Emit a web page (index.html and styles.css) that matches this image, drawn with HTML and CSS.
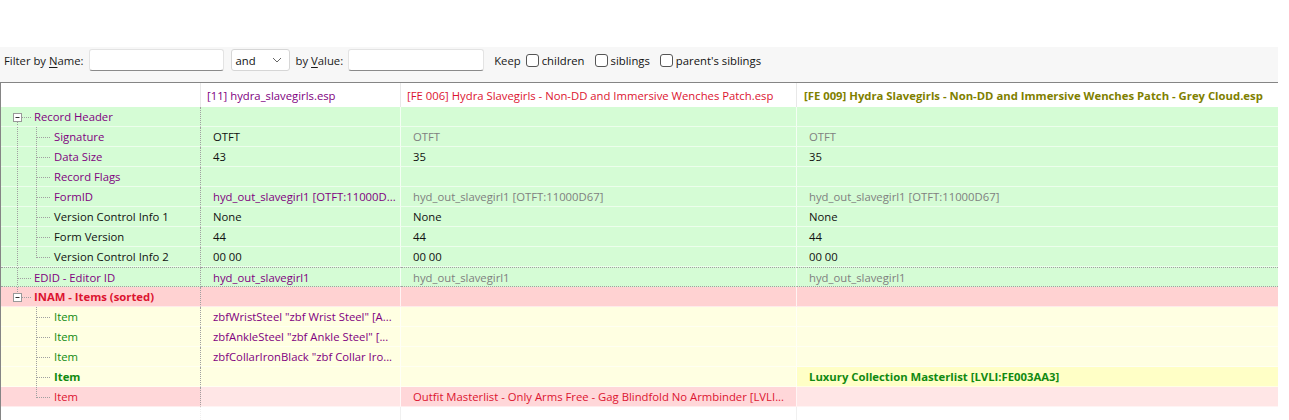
FILE: index.html
```html
<!DOCTYPE html>
<html lang="en">
<head>
<meta charset="UTF-8">
<title>Record View</title>
<link rel="stylesheet" href="styles.css">
</head>
<body>

<svg class="defs" width="0" height="0">
    <!-- tree guide pieces, one per kind of row -->
    <symbol id="root-open-first" viewBox="0 0 32 20">
        <rect x="12.5" y="6.5" width="8" height="8" fill="#fff" stroke="#999"/>
        <path d="M14.5 10.5h4" stroke="#333"/>
        <path d="M21 10.5h9M16.5 15v5" stroke="#a0a0a0" stroke-dasharray="1 1"/>
    </symbol>
    <symbol id="root-leaf" viewBox="0 0 32 20">
        <path d="M16.5 0v20M17 10.5h13" stroke="#a0a0a0" stroke-dasharray="1 1"/>
    </symbol>
    <symbol id="root-open-last" viewBox="0 0 32 20">
        <rect x="12.5" y="6.5" width="8" height="8" fill="#fff" stroke="#999"/>
        <path d="M14.5 10.5h4" stroke="#333"/>
        <path d="M21 10.5h9M16.5 0v6" stroke="#a0a0a0" stroke-dasharray="1 1"/>
    </symbol>
    <symbol id="child-mid" viewBox="0 0 52 20">
        <path d="M16.5 0v20M35.5 0v20M36 10.5h13" stroke="#a0a0a0" stroke-dasharray="1 1"/>
    </symbol>
    <symbol id="child-end" viewBox="0 0 52 20">
        <path d="M16.5 0v20M35.5 0v11M36 10.5h13" stroke="#a0a0a0" stroke-dasharray="1 1"/>
    </symbol>
    <symbol id="last-child-mid" viewBox="0 0 52 20">
        <path d="M35.5 0v20M36 10.5h13" stroke="#a0a0a0" stroke-dasharray="1 1"/>
    </symbol>
    <symbol id="last-child-end" viewBox="0 0 52 20">
        <path d="M35.5 0v11M36 10.5h13" stroke="#a0a0a0" stroke-dasharray="1 1"/>
    </symbol>
</svg>

<div class="page">

<div class="filter-bar">
    <label class="lbl">Filter by <u>N</u>ame:</label>
    <input type="text" class="field name-field">
    <div class="combo">
        <span>and</span>
        <svg width="10" height="6" viewBox="0 0 10 6"><path d="M1 1l4 4 4-4" fill="none" stroke="#666"/></svg>
    </div>
    <label class="lbl value-lbl">by <u>V</u>alue:</label>
    <input type="text" class="field value-field">
    <span class="lbl keep">Keep</span>
    <label class="check"><input type="checkbox">children</label>
    <label class="check"><input type="checkbox">siblings</label>
    <label class="check"><input type="checkbox">parent's siblings</label>
</div>

<div class="view">
    <div class="row head">
        <div class="cell c1"></div>
        <div class="cell c2 purple">[11] hydra_slavegirls.esp</div>
        <div class="cell c3 red">[FE 006] Hydra Slavegirls - Non-DD and Immersive Wenches Patch.esp</div>
        <div class="cell c4 olive bold">[FE 009] Hydra Slavegirls - Non-DD and Immersive Wenches Patch - Grey Cloud.esp</div>
    </div>

    <div class="row green">
        <div class="cell c1 purple"><svg class="guide root"><use href="#root-open-first"/></svg>Record Header</div>
        <div class="cell c2"></div>
        <div class="cell c3"></div>
        <div class="cell c4"></div>
    </div>
    <div class="row green">
        <div class="cell c1 purple"><svg class="guide"><use href="#child-mid"/></svg>Signature</div>
        <div class="cell c2">OTFT</div>
        <div class="cell c3 grey">OTFT</div>
        <div class="cell c4 grey">OTFT</div>
    </div>
    <div class="row green">
        <div class="cell c1 purple"><svg class="guide"><use href="#child-mid"/></svg>Data Size</div>
        <div class="cell c2">43</div>
        <div class="cell c3">35</div>
        <div class="cell c4">35</div>
    </div>
    <div class="row green">
        <div class="cell c1 purple"><svg class="guide"><use href="#child-mid"/></svg>Record Flags</div>
        <div class="cell c2"></div>
        <div class="cell c3"></div>
        <div class="cell c4"></div>
    </div>
    <div class="row green">
        <div class="cell c1 purple"><svg class="guide"><use href="#child-mid"/></svg>FormID</div>
        <div class="cell c2 purple">hyd_out_slavegirl1 [OTFT:11000D...</div>
        <div class="cell c3 grey">hyd_out_slavegirl1 [OTFT:11000D67]</div>
        <div class="cell c4 grey">hyd_out_slavegirl1 [OTFT:11000D67]</div>
    </div>
    <div class="row green">
        <div class="cell c1"><svg class="guide"><use href="#child-mid"/></svg>Version Control Info 1</div>
        <div class="cell c2">None</div>
        <div class="cell c3">None</div>
        <div class="cell c4">None</div>
    </div>
    <div class="row green">
        <div class="cell c1"><svg class="guide"><use href="#child-mid"/></svg>Form Version</div>
        <div class="cell c2">44</div>
        <div class="cell c3">44</div>
        <div class="cell c4">44</div>
    </div>
    <div class="row green">
        <div class="cell c1"><svg class="guide"><use href="#child-end"/></svg>Version Control Info 2</div>
        <div class="cell c2">00 00</div>
        <div class="cell c3">00 00</div>
        <div class="cell c4">00 00</div>
    </div>
    <div class="row green dotted">
        <div class="cell c1 purple"><svg class="guide root"><use href="#root-leaf"/></svg>EDID - Editor ID</div>
        <div class="cell c2 purple">hyd_out_slavegirl1</div>
        <div class="cell c3 grey">hyd_out_slavegirl1</div>
        <div class="cell c4 grey">hyd_out_slavegirl1</div>
    </div>

    <div class="row pink">
        <div class="cell c1 red bold"><svg class="guide root"><use href="#root-open-last"/></svg>INAM - Items (sorted)</div>
        <div class="cell c2"></div>
        <div class="cell c3"></div>
        <div class="cell c4"></div>
    </div>
    <div class="row yellow">
        <div class="cell c1 green-text"><svg class="guide"><use href="#last-child-mid"/></svg>Item</div>
        <div class="cell c2 purple">zbfWristSteel "zbf Wrist Steel" [A...</div>
        <div class="cell c3"></div>
        <div class="cell c4"></div>
    </div>
    <div class="row yellow">
        <div class="cell c1 green-text"><svg class="guide"><use href="#last-child-mid"/></svg>Item</div>
        <div class="cell c2 purple">zbfAnkleSteel "zbf Ankle Steel" [...</div>
        <div class="cell c3"></div>
        <div class="cell c4"></div>
    </div>
    <div class="row yellow">
        <div class="cell c1 green-text"><svg class="guide"><use href="#last-child-mid"/></svg>Item</div>
        <div class="cell c2 purple">zbfCollarIronBlack "zbf Collar Iro...</div>
        <div class="cell c3"></div>
        <div class="cell c4"></div>
    </div>
    <div class="row yellow">
        <div class="cell c1 green-text bold"><svg class="guide"><use href="#last-child-mid"/></svg>Item</div>
        <div class="cell c2"></div>
        <div class="cell c3"></div>
        <div class="cell c4 added green-text bold">Luxury Collection Masterlist [LVLI:FE003AA3]</div>
    </div>
    <div class="row rose">
        <div class="cell c1 red strong-rose"><svg class="guide"><use href="#last-child-end"/></svg>Item</div>
        <div class="cell c2"></div>
        <div class="cell c3 red strong-rose">Outfit Masterlist - Only Arms Free - Gag Blindfold No Armbinder [LVLI...</div>
        <div class="cell c4"></div>
    </div>

    <div class="row filler">
        <div class="cell c1"></div>
        <div class="cell c2"></div>
        <div class="cell c3"></div>
        <div class="cell c4"></div>
    </div>
</div>

</div>

</body>
</html>
```

FILE: styles.css
```css
body {
    margin: 0;
    padding: 0;
    background-color: #fff;
    font-family: "Open Sans", "Noto Sans", sans-serif;
    font-size: 11.3px;
    color: #111;
    overflow: hidden;
}
.defs {
    position: absolute;
    width: 0;
    height: 0;
}
.page {
    width: 1278px;
    padding-top: 47px;
}

/* filter toolbar */
.filter-bar {
    display: flex;
    align-items: center;
    height: 36px;
    background-color: #f7f7f7;
    padding: 2px 0 11px 4px;
    box-sizing: border-box;
    border-bottom: 1px solid #858585;
}
.lbl {
    color: #1a1a1a;
    white-space: nowrap;
}
.lbl u {
    text-decoration-thickness: 1px;
    text-underline-offset: 2px;
}
.field {
    height: 22px;
    box-sizing: border-box;
    margin: 0 0 0 5px;
    padding: 0 6px;
    border: 1px solid #e3e3e3;
    border-bottom-color: #8a8a8a;
    border-radius: 3px;
    background-color: #fff;
    font: inherit;
}
.name-field {
    width: 135px;
}
.value-field {
    width: 136px;
}
.combo {
    display: flex;
    align-items: center;
    justify-content: space-between;
    width: 59px;
    height: 22px;
    box-sizing: border-box;
    margin-left: 7px;
    padding: 0 7px 0 4px;
    border: 1px solid #d6d6d6;
    border-radius: 3px;
    background-color: #fff;
}
.value-lbl {
    margin-left: 6px;
}
.keep {
    margin-left: 10px;
}
.check {
    display: flex;
    align-items: center;
    margin-left: 5px;
    margin-right: 5px;
    white-space: nowrap;
}
.check input {
    appearance: none;
    width: 13px;
    height: 13px;
    margin: 0 3px 0 0;
    border: 1px solid #555;
    border-radius: 3px;
    background-color: #fff;
}

/* record grid */
.view {
    border-left: 1px solid #858585;
    height: 337px;
    display: flex;
    flex-direction: column;
}
.row {
    display: grid;
    grid-template-columns: 200px 200px 396px 481px;
    height: 20px;
}
.cell {
    display: flex;
    align-items: center;
    box-sizing: border-box;
    padding-left: 12px;
    border-right: 1px solid rgba(255, 255, 255, 0.75);
    border-bottom: 1px solid rgba(255, 255, 255, 0.55);
    white-space: nowrap;
    overflow: hidden;
    line-height: 19px;
}
.cell.c1 {
    padding-left: 0;
    border-right: 1px dotted #a0a0a0;
}
.cell.c4 {
    border-right: none;
}
.guide {
    width: 32px;
    height: 20px;
    flex: none;
    align-self: flex-start;
    margin-right: 1px;
}
.row:not(.head) .guide:not(.root) {
    width: 52px;
}

.head {
    height: 24px;
    background-color: #fff;
}
.head .cell {
    padding-left: 6px;
    border-right-color: #e8e8e8;
    border-bottom: none;
    line-height: 23px;
}
.head .cell.c1 {
    border-right: 1px solid #e8e8e8;
}
.head .c4 {
    padding-left: 7px;
}

.filler {
    flex: 1;
    height: auto;
}
.filler .cell {
    border-right-color: #f0f0f0;
    border-bottom: none;
}

.green {
    background-color: #d5fcd5;
}
.dotted .cell {
    border-top: 1px dotted #a0a0a0;
    border-bottom: 1px dotted #a0a0a0;
}
.pink {
    background-color: #ffd2d2;
}
.yellow {
    background-color: #ffffe2;
}
.rose {
    background-color: #ffe6e6;
}
.added {
    background-color: #ffffc6;
}
.strong-rose {
    background-color: #ffd7d9;
}

.purple {
    color: #800080;
}
.red {
    color: #dc1430;
}
.olive {
    color: #7f7f00;
}
.grey {
    color: #808080;
}
.green-text {
    color: #118a11;
}
.bold {
    font-weight: bold;
}
```
